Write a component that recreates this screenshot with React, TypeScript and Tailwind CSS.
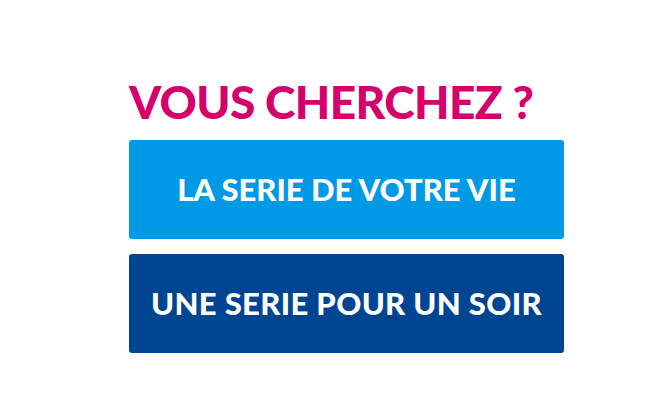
export default function App() {
  return (
    <div className="min-h-screen w-full bg-white font-['Lato',sans-serif]">
      <div className="ml-[129px] flex w-[435px] flex-col pt-[76px]">
        <h1 className="text-[46px] font-black leading-[52px] tracking-[-0.6px] text-[#d4006c]">
          VOUS CHERCHEZ ?
        </h1>
        <div className="mt-[12px] flex flex-col gap-[15px]">
          <button className="flex h-[99px] items-center justify-center rounded-[3px] bg-[#0099e5] text-[31px] font-black text-white">
            LA SERIE DE VOTRE VIE
          </button>
          <button className="flex h-[99px] items-center justify-center rounded-[3px] bg-[#004592] text-[31px] font-black tracking-[0.35px] text-white">
            UNE SERIE POUR UN SOIR
          </button>
        </div>
      </div>
    </div>
  );
}
